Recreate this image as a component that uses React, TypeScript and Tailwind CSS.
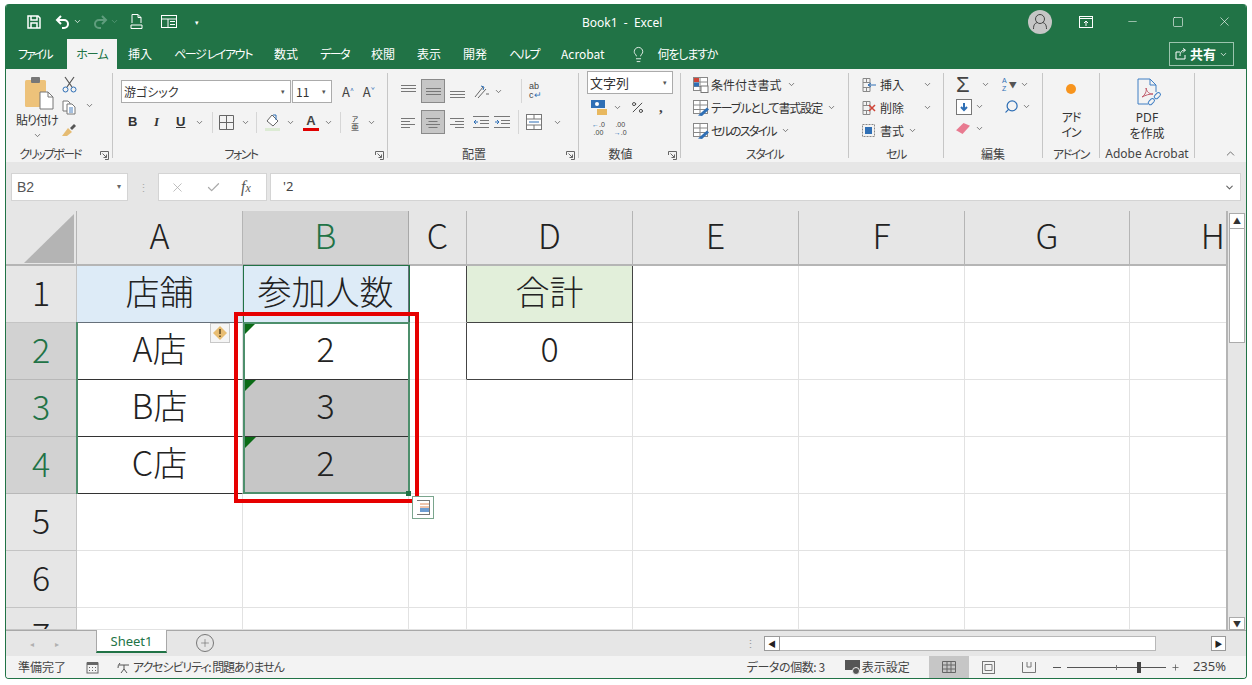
import React from 'react';
import { ChevronDown, ChevronUp, Lightbulb, Search, X, Check, Minus, Square, Plus, Percent } from 'lucide-react';

const jp = 'font-["Noto_Sans_CJK_JP","Noto_Sans",sans-serif] [font-feature-settings:"palt"]';

const Chev = ({ className = '' }: { className?: string }) => (
    <ChevronDown size={9} strokeWidth={2} className={`text-[#555] shrink-0 ${className}`} />
);

const Launcher = () => (
    <svg width="9" height="9" viewBox="0 0 9 9" className="shrink-0" fill="none" stroke="#666">
        <path d="M.5 4V.5H8.500V8.500H5" />
        <path d="M2.500 2.500L6.500 6.500M6.500 3.500V6.500H3.500" />
    </svg>
);

// horizontal alignment icon, four lines
const Lines = ({ kind = 'center' }: { kind?: string }) => {
    const w = 14;
    const ys = [3, 6, 9, 12];
    const parts = [w, w - 5, w, w - 5];
    return (
        <svg width={w} height="15" viewBox={`0 0 ${w} 15`} stroke="#777" className="shrink-0">
            {ys.map((y, i) => {
                const x = kind === 'center' ? (w - parts[i]) / 2 : kind === 'right' ? w - parts[i] : 0;
                return <path key={y} d={`M${x} ${y}.5H${x + parts[i]}`} />;
            })}
        </svg>
    );
};

// vertical alignment icon, three lines
const VLines = ({ top }: { top: number }) => (
    <svg width="15" height="15" viewBox="0 0 15 15" stroke="#777" className="shrink-0">
        {[0, 3, 6].map(d => <path key={d} d={`M0 ${top + d}.5H15`} />)}
    </svg>
);

const Group = ({ width, label, launcher = false, labelClass = '', children }: { width: string; label: string; launcher?: boolean; labelClass?: string; children: React.ReactNode }) => (
    <div className={`${width} shrink-0 h-[85px] mt-[4px] flex flex-col relative border-r border-[#c6c6c6]`}>
        <div className="h-[71px] shrink-0 flex">{children}</div>
        <div className={`h-[19px] shrink-0 text-[12px] leading-[19px] text-center text-[#444] whitespace-nowrap ${launcher ? 'pr-[18px]' : ''} ${labelClass}`}>{label}</div>
        {launcher && <div className="absolute right-[3px] -bottom-[2px]"><Launcher /></div>}
    </div>
);

const ClipboardGroup = () => (
    <Group width="w-[107px]" label="クリップボード" launcher labelClass="tracking-[-1.8px]">
        <div className="w-[53px] pl-[10px] flex flex-col">
            <svg width="30" height="34" viewBox="0 0 30 34" className="ml-[9px] mt-[3px]">
                <rect x="0" y="4" width="21" height="27" rx="1.500" fill="#edc27a" />
                <rect x="6" y="1" width="9" height="6" rx="1" fill="#777" />
                <path d="M15 16h8l5 5v12H15z" fill="#fff" stroke="#777" />
                <path d="M23 16v5h5" fill="none" stroke="#777" />
            </svg>
            <div className="text-[12px] leading-[14px] whitespace-nowrap mt-[3px] text-[#333] tracking-[-1px]">貼り付け</div>
            <Chev className="ml-[17px] mt-[4px]" />
        </div>
        <div className="flex flex-col pl-[3px] pt-[3px] gap-[7px]">
            <svg width="15" height="17" viewBox="0 0 15 17" fill="none" stroke="#555">
                <path d="M3 1l7 10M12 1L5 11" strokeWidth="1.200" />
                <circle cx="3.500" cy="13.500" r="2.500" stroke="#2f6fb5" />
                <circle cx="11.500" cy="13.500" r="2.500" stroke="#2f6fb5" />
            </svg>
            <svg width="14" height="15" viewBox="0 0 14 15" fill="#fff" stroke="#777"><path d="M1 1h5l2 2v8H1z" /><path d="M5 4h5l3 3v7H5z" /><path d="M7 8h4M7 10h4M7 12h4" stroke="#4a7ebb" /></svg>
            <svg width="15" height="15" viewBox="0 0 15 15"><path d="M0 14L6 6l4 4-5 4z" fill="#e5bb72" /><path d="M8 6l4-4 2 2-4 4z" fill="#555" /></svg>
        </div>
        <div className="pl-[8px] pt-[28px]"><Chev /></div>
    </Group>
);

const FontGroup = () => (
    <Group width="w-[275px]" label="フォント" launcher labelClass="tracking-[-1.500px]">
        <div className="pl-[8px] pt-[7px] flex flex-col gap-[9px]">
            <div className="flex items-center">
                <div className="w-[170px] h-[23px] bg-white border border-[#ababab] flex items-center justify-between px-[2px] text-[12px] text-[#333]">
                    游ゴシック<span className="text-[7px] text-[#555] pr-[3px]">▾</span>
                </div>
                <div className="w-[40px] h-[23px] bg-white border border-[#ababab] ml-[1px] flex items-center justify-between px-[3px] text-[12px] text-[#333]">
                    11<span className="text-[7px] text-[#555] pr-[2px]">▾</span>
                </div>
                <span className="ml-[10px] text-[13px] text-[#444]">A<sup className="text-[7px] text-[#2f6fb5]">^</sup></span>
                <span className="ml-[9px] text-[13px] text-[#444]">A<sup className="text-[7px] text-[#2f6fb5]">ˇ</sup></span>
            </div>
            <div className="flex items-center h-[20px] pl-[7px] text-[13px] text-[#333]">
                <b className="font-['Liberation_Sans',sans-serif] w-[12px]">B</b>
                <i className="font-['Liberation_Serif',serif] font-bold w-[14px] ml-[14px]">I</i>
                <u className="font-['Liberation_Sans',sans-serif] font-bold w-[12px] ml-[8px]">U</u>
                <Chev className="ml-[7px]" />
                <div className="w-px h-[21px] bg-[#d6d6d6] ml-[8px]" />
                <svg width="15" height="15" viewBox="0 0 15 15" fill="none" stroke="#666" className="ml-[6px] shrink-0"><path d="M.5.5h14v14H.5zM7.500.5v14M.5 7.500h14" /></svg>
                <Chev className="ml-[7px]" />
                <div className="w-px h-[21px] bg-[#d6d6d6] ml-[6px]" />
                <svg width="17" height="18" viewBox="0 0 17 18" fill="none" className="ml-[7px] shrink-0"><path d="M8 2l6 6-5 5-6-5z" fill="#fff" stroke="#666" /><path d="M9 2h3v5" stroke="#2f6fb5" /><rect x="1" y="15" width="15" height="3" fill="#dcebd4" /></svg>
                <Chev className="ml-[5px]" />
                <div className="flex flex-col items-center w-[16px] ml-[8px] font-['Liberation_Sans',sans-serif] font-bold leading-[14px] text-[#444]">A<div className="w-[16px] h-[3px] bg-[#e00000]" /></div>
                <Chev className="ml-[5px]" />
                <div className="w-px h-[21px] bg-[#d6d6d6] ml-[7px]" />
                <span className="text-[8px] leading-[9px] w-[12px] ml-[8px] text-center">ァ<br />亜</span>
                <Chev className="ml-[6px]" />
            </div>
        </div>
    </Group>
);

const AlignGroup = () => (
    <Group width="w-[191px]" label="配置" launcher>
        <div className="pl-[13px] pt-[6px] flex flex-col gap-[7px]">
            <div className="flex items-center h-[24px]">
                <VLines top={1} />
                <div className="w-[24px] h-[24px] ml-[5px] bg-[#c6c6c6] border border-[#8a8a8a] flex items-center justify-center"><VLines top={4} /></div>
                <div className="ml-[5px]"><VLines top={7} /></div>
                <svg width="17" height="15" viewBox="0 0 17 15" className="ml-[8px] shrink-0" stroke="#666" fill="none"><path d="M2 13L10 3M5 14l8-9M13 10h3" /><path d="M8 2l3 1-1 3" stroke="#2f6fb5" /></svg>
                <Chev className="ml-[4px]" />
                <div className="w-px h-[24px] bg-[#d6d6d6] ml-[18px]" />
                <div className="ml-[7px] text-[9px] leading-[9px] text-[#444] w-[16px] font-['Liberation_Sans',sans-serif]">ab<br />c<span className="text-[#2f6fb5]">↵</span></div>
            </div>
            <div className="flex items-center h-[24px]">
                <Lines kind="left" />
                <div className="w-[24px] h-[24px] ml-[6px] bg-[#c6c6c6] border border-[#8a8a8a] flex items-center justify-center"><Lines /></div>
                <div className="ml-[5px]"><Lines kind="right" /></div>
                <svg width="16" height="14" viewBox="0 0 16 14" className="ml-[9px] shrink-0" stroke="#777" fill="none"><path d="M0 1.500H16M7 5.500H16M7 8.500H16M0 12.500H16" /><path d="M5 7H1M3 5L1 7l2 2" stroke="#2f6fb5" /></svg>
                <svg width="16" height="14" viewBox="0 0 16 14" className="ml-[5px] shrink-0" stroke="#777" fill="none"><path d="M0 1.500H16M7 5.500H16M7 8.500H16M0 12.500H16" /><path d="M1 7h4M3 5l2 2-2 2" stroke="#2f6fb5" /></svg>
                <div className="w-px h-[24px] bg-[#d6d6d6] ml-[8px]" />
                <svg width="16" height="16" viewBox="0 0 16 16" className="ml-[7px] shrink-0" stroke="#777" fill="#fff"><rect x=".5" y=".5" width="15" height="15" /><path d="M.5 5h15M.5 11h15M8 .5V5M8 11v4.500" /><path d="M3 8h10" stroke="#2f6fb5" /></svg>
                <Chev className="ml-[11px]" />
            </div>
        </div>
    </Group>
);

const NumberGroup = () => (
    <Group width="w-[102px]" label="数値" launcher>
        <div className="pl-[8px] -mt-[2px] flex flex-col">
            <div className="w-[86px] h-[23px] bg-white border border-[#ababab] flex items-center justify-between px-[2px] text-[13px] text-[#333]">
                文字列<span className="text-[7px] text-[#555] pr-[3px]">▾</span>
            </div>
            <div className="flex items-center h-[22px] mt-[2px]">
                <svg width="17" height="17" viewBox="0 0 17 17" className="ml-[4px] shrink-0"><rect x="0" y="1" width="14" height="8" fill="#2f6fb5" /><circle cx="6" cy="5" r="2" fill="#fff" /><rect x="6" y="10" width="10" height="6" fill="#e8b85f" /></svg>
                <Chev className="ml-[5px]" />
                <Percent size={15} className="ml-[8px] text-[#444]" strokeWidth={1.500} />
                <span className="ml-[14px] font-bold text-[15px] leading-[15px] text-[#444] font-['Liberation_Serif',serif]">,</span>
            </div>
            <div className="flex h-[20px] mt-[3px] ml-[5px] text-[7px] leading-[8px] gap-[9px] text-[#444] font-['Liberation_Sans',sans-serif]">
                <span className="text-center"><span className="text-[#2f6fb5]">←</span>.0<br />.00</span>
                <span className="text-center">.00<br /><span className="text-[#2f6fb5]">→</span>.0</span>
            </div>
        </div>
    </Group>
);

const StyleIcon = ({ kind }: { kind: string }) => (
    <svg width="16" height="16" viewBox="0 0 16 16" fill="#fff" stroke="#888" className="shrink-0 mr-[2px]">
        <rect x=".5" y=".5" width="14" height="13" />
        <path d="M.5 5h14M.5 9.500h14M7 .5v13" />
        {kind === 'cond' ? (
            <>
                <rect x="1" y="1" width="5" height="4" fill="#d04437" stroke="none" />
                <rect x="1" y="5.500" width="5" height="4" fill="#2f6fb5" stroke="none" />
                <rect x="8" y="9" width="7" height="6.500" fill="#fff" stroke="#777" />
            </>
        ) : (
            <path d="M5 15.500l9-8 2 2-7 6.500z" fill="#2f6fb5" stroke="none" />
        )}
    </svg>
);

const StylesGroup = () => (
    <Group width="w-[168px]" label="スタイル" labelClass="tracking-[-1.500px]">
        <div className="pl-[12px] flex flex-col">
            {[
                { k: 'cond', t: '条件付き書式', s: '' },
                { k: 'table', t: 'テーブルとして書式設定', s: 'tracking-[-1.100px]' },
                { k: 'cell', t: 'セルのスタイル', s: 'tracking-[-1.800px]' },
            ].map(r => (
                <div key={r.t} className="flex items-center h-[23px] whitespace-nowrap text-[12px] text-[#333]">
                    <StyleIcon kind={r.k} />
                    <span className={r.s}>{r.t}</span>
                    <Chev className="ml-[5px]" />
                </div>
            ))}
        </div>
    </Group>
);

const CellIcon = ({ kind }: { kind: string }) => (
    <svg width="16" height="16" viewBox="0 0 16 16" fill="none" stroke="#888" className="mr-[3px] shrink-0">
        {kind === 'format' ? (
            <>
                <path d="M1.500 1.500h12v12h-12z" strokeDasharray="2 1" />
                <rect x="4" y="4" width="7" height="7" fill="#2f6fb5" stroke="none" />
            </>
        ) : (
            <>
                <path d="M2 1.500h7M2 5.500h7M2 10.500h7M2 14.500h7M2 1.500v13M9 1.500v13M5.500 1.500v4M5.500 10.500v4" />
                {kind === 'ins' ? <path d="M15 8H7M10 6L7 8l3 2" stroke="#2f6fb5" /> : <path d="M8 5l6 6M14 5l-6 6" stroke="#d04437" strokeWidth="1.500" />}
            </>
        )}
    </svg>
);

const CellsGroup = () => (
    <Group width="w-[95px]" label="セル" labelClass="tracking-[-1.500px]">
        <div className="pl-[12px] flex flex-col">
            {[
                { t: '挿入', k: 'ins', ml: 'ml-[19px]' },
                { t: '削除', k: 'del', ml: 'ml-[19px]' },
                { t: '書式', k: 'format', ml: 'ml-[4px]' },
            ].map(r => (
                <div key={r.t} className="flex items-center h-[23px] text-[12px] text-[#333]">
                    <CellIcon kind={r.k} />
                    {r.t}
                    <Chev className={r.ml} />
                </div>
            ))}
        </div>
    </Group>
);

const EditGroup = () => (
    <Group width="w-[99px]" label="編集">
        <div className="pl-[12px] flex flex-col">
            <div className="flex items-center h-[23px]">
                <span className="text-[22px] leading-[22px] text-[#444] w-[16px] font-['Liberation_Sans',sans-serif]">Σ</span>
                <Chev className="ml-[9px]" />
                <span className="ml-[12px] text-[7px] leading-[8px] text-[#2f6fb5] font-['Liberation_Sans',sans-serif]">A<br />Z</span>
                <span className="text-[8px] text-[#555] ml-[2px]">▼</span>
                <Chev className="ml-[3px]" />
            </div>
            <div className="flex items-center h-[21px]">
                <svg width="16" height="16" viewBox="0 0 16 16" fill="#fff" stroke="#777" className="shrink-0"><rect x=".5" y=".5" width="15" height="15" /><path d="M8 4v7M5 8l3 3 3-3" stroke="#2f6fb5" strokeWidth="2" fill="none" /></svg>
                <Chev className="ml-[3px]" />
                <Search size={15} className="ml-[20px] -scale-x-100 text-[#2f6fb5]" strokeWidth={2} />
                <Chev className="ml-[3px]" />
            </div>
            <div className="flex items-center h-[23px]">
                <svg width="15" height="13" viewBox="0 0 16 14" className="shrink-0"><path d="M0 9l8-8 7 3-8 9z" fill="#e87a90" /></svg>
                <Chev className="ml-[4px]" />
            </div>
        </div>
    </Group>
);

const AddinGroup = () => (
    <Group width="w-[57px]" label="アドイン" labelClass="tracking-[-1.500px]">
        <div className="w-full flex flex-col items-center pt-[11px]">
            <div className="w-[10px] h-[10px] rounded-full bg-[#f7941d]" />
            <div className="text-[12px] leading-[15px] text-center mt-[15px] text-[#333] tracking-[-1px]">アド<br />イン</div>
        </div>
    </Group>
);

const AcrobatGroup = () => (
    <Group width="w-[95px]" label="Adobe Acrobat" labelClass="font-['Noto_Sans',sans-serif]">
        <div className="w-full flex flex-col items-center pt-[5px]">
            <svg width="28" height="30" viewBox="0 0 28 30" fill="none" stroke="#3f7ec4" className="ml-[3px]">
                <path d="M13 26H3V1h12l6 6v7" />
                <path d="M15 1v6h6" />
                <path d="M7 19c3-2 5-6 4-9 1 4 3 6 7 6-4 0-7 1-11 3z" stroke="#c05a6a" />
                <rect x="13" y="22" width="7" height="4" rx="2" transform="rotate(-45 16 24)" />
                <rect x="19" y="16" width="7" height="4" rx="2" transform="rotate(-45 22 18)" />
            </svg>
            <div className="text-[12px] leading-[15px] text-center mt-[1px] text-[#333]"><span className="font-['Noto_Sans',sans-serif]">PDF</span><br />を作成</div>
        </div>
    </Group>
);

const tabs = [
    { t: '挿入', s: '' },
    { t: 'ページ レイアウト', s: 'tracking-[-1.400px]' },
    { t: '数式', s: '' },
    { t: 'データ', s: 'tracking-[-1.500px]' },
    { t: '校閲', s: '' },
    { t: '表示', s: '' },
    { t: '開発', s: '' },
    { t: 'ヘルプ', s: 'tracking-[-1.500px]' },
    { t: 'Acrobat', s: '' },
];

const Header = () => (
    <div className="bg-[#217346] text-white">
        <div className="h-[35px] flex items-center relative">
            <div className="flex items-center pl-[21px] gap-[8px]">
                <svg width="14" height="14" viewBox="0 0 14 14" fill="none" stroke="#fff" strokeWidth="1.500"><path d="M1 1h10l2 2v10H1z" /><path d="M4 1v4h6V1M4 13V8h6v5" /></svg>
                <svg width="16" height="14" viewBox="0 0 16 14" fill="none" stroke="#fff" strokeWidth="2" className="ml-[6px]"><path d="M6 1L2 5l4 4" /><path d="M2 5h7a4 4 0 010 8H7" /></svg>
                <ChevronDown size={9} className="-ml-[6px]" />
                <svg width="16" height="14" viewBox="0 0 16 14" fill="none" stroke="#5f9d7d" strokeWidth="2" className="ml-[2px]"><path d="M10 1l4 4-4 4" /><path d="M14 5H7a4 4 0 000 8h2" /></svg>
                <ChevronDown size={9} className="-ml-[6px] text-[#5f9d7d]" />
                <svg width="13" height="15" viewBox="0 0 13 15" fill="none" stroke="#fff" className="ml-[3px]"><path d="M2 9V.5h6l3 3V9M8 .5v3h3M1 11h11v3.500H1z" /></svg>
                <svg width="16" height="13" viewBox="0 0 16 13" fill="none" stroke="#fff" className="ml-[10px]"><rect x=".5" y=".5" width="15" height="12" /><path d="M.5 4h15M7 4v8.500M9 6.500h5M9 9.500h5" /></svg>
                <span className="ml-[10px] text-[7px] leading-[8px]">▾</span>
            </div>
            <div className="absolute left-[576px] top-[10px] text-[12px] leading-[18px] whitespace-pre font-['Noto_Sans',sans-serif]">Book1  -  Excel</div>
            <div className="ml-auto flex items-center">
                <div className="w-[24px] h-[24px] rounded-full bg-[#c6c6c6] flex items-center justify-center">
                    <svg width="16" height="18" viewBox="0 0 16 18" fill="none" stroke="#444"><circle cx="8" cy="6" r="4.500" /><path d="M1.500 16c0-5 2-6 4-6.500M14.500 16c0-5-2-6-4-6.500" /></svg>
                </div>
                <svg width="14" height="12" viewBox="0 0 14 12" fill="none" stroke="#fff" className="ml-[27px]"><rect x=".5" y=".5" width="13" height="11" /><path d="M.5 2.500h13M7 10V5M5 7l2-2 2 2" /></svg>
                <Minus size={13} strokeWidth={1} className="ml-[33px]" />
                <Square size={12} strokeWidth={1.200} className="ml-[33px]" />
                <X size={15} strokeWidth={1} className="ml-[33px] mr-[14px]" />
            </div>
        </div>
        <div className="h-[30px] flex items-end text-[12px] leading-[30px]">
            <div className="pl-[12px] w-[61px] h-[30px] tracking-[-2px]">ファイル</div>
            <div className="w-[50px] h-[30px] bg-[#f3f3f3] text-[#217346] text-center tracking-[-1px]">ホーム</div>
            <div className="flex h-[30px] pl-[11px] gap-[22px] whitespace-nowrap">
                {tabs.map(t => <span key={t.t} className={t.s}>{t.t}</span>)}
            </div>
            <div className="flex items-center h-[30px] ml-[25px] gap-[11px] whitespace-nowrap">
                <Lightbulb size={17} strokeWidth={1.200} />
                <span className="tracking-[-1.200px]">何をしますか</span>
            </div>
            <div className="ml-auto mr-[12px] mb-[3px] w-[65px] h-[24px] border border-[#9cc4ae] flex items-center justify-center gap-[3px]">
                <svg width="12" height="12" viewBox="0 0 12 12" fill="none" stroke="#fff"><path d="M1 4v7h9V7M1 4h4M5 8c0-4 2-6 5-6M8 .5L10.500 2 8 4.500" /></svg>
                <span className="font-bold text-[13px] leading-[22px]">共有</span>
                <ChevronDown size={9} />
            </div>
        </div>
    </div>
);

const Ribbon = () => (
    <div className="h-[93px] bg-[#f3f3f3] flex relative">
        <ClipboardGroup />
        <FontGroup />
        <AlignGroup />
        <NumberGroup />
        <StylesGroup />
        <CellsGroup />
        <EditGroup />
        <AddinGroup />
        <AcrobatGroup />
        <ChevronUp size={13} strokeWidth={1.500} className="absolute right-[9px] bottom-[2px] text-[#555]" />
    </div>
);

const FormulaBar = () => (
    <div className="h-[49px] bg-[#e6e6e6] pt-[11px] px-[5px] flex items-start">
        <div className="w-[117px] h-[28px] bg-white border border-[#d4d4d4] flex items-center justify-between pl-[5px] pr-[6px] text-[14px] text-[#555] font-['Liberation_Sans',sans-serif]">
            B2<span className="text-[8px] text-[#666]">▾</span>
        </div>
        <div className="w-[30px] h-[28px] flex items-center justify-center text-[#aaa] text-[11px] leading-[6px]">⋮</div>
        <div className="w-[109px] h-[28px] bg-white border border-[#d4d4d4] flex items-center pl-[11px] text-[#aaa]">
            <X size={15} strokeWidth={1.200} />
            <Check size={15} strokeWidth={2} className="ml-[21px]" />
            <i className="ml-[20px] text-[16px] leading-[18px] text-[#555] font-['Liberation_Serif',serif]">f<span className="text-[12px]">x</span></i>
        </div>
        <div className="flex-1 h-[28px] ml-[3px] bg-white border border-[#d4d4d4] flex items-center justify-between pl-[12px] pr-[5px] text-[13px] text-[#444] font-['Noto_Sans',sans-serif]">
            &apos;2<ChevronDown size={11} strokeWidth={2.500} className="text-[#666]" />
        </div>
    </div>
);

const colHeaders = ['A', 'B', 'C', 'D', 'E', 'F', 'G', 'H'];

const dataRows = [
    { a: '店舗', b: '参加人数', d: '合計', head: true },
    { a: 'A店', b: '2', d: '0' },
    { a: 'B店', b: '3' },
    { a: 'C店', b: '2' },
    {},
    {},
    {},
] as { a?: string; b?: string; d?: string; head?: boolean }[];

const sheetText = 'text-[34px] leading-none font-light [font-feature-settings:normal] pb-[6px]';

const GreenCorner = () => (
    <svg width="13" height="13" viewBox="0 0 13 13" className="absolute left-0 top-0"><path d="M0 0h13L0 13z" fill="#0b6b16" /></svg>
);

const Sheet = () => (
    <div className="flex-1 relative overflow-hidden flex">
        <div className="flex-1 overflow-hidden grid grid-cols-[71px_166px_166px_58px_166px_166px_166px_165px_96px] grid-rows-[55px_repeat(6,57px)_22px] text-[#222]">
            <div className="bg-[#e6e6e6] border-r border-b-2 border-[#b5b5b5] relative">
                <svg width="50" height="49" viewBox="0 0 50 49" className="absolute right-[2px] bottom-[1px]"><path d="M50 0V49H0z" fill="#b4b4b4" /></svg>
            </div>
            {colHeaders.map(c => (
                <div key={c} className={`border-r border-b-2 flex items-center ${c === 'H' ? 'justify-end border-r-0 pr-[1px]' : 'justify-center'} ${sheetText} ${c === 'B' ? 'bg-[#d2d2d2] border-[#a8a8a8] text-[#217346]' : 'bg-[#e6e6e6] border-[#b5b5b5]'}`}>{c}</div>
            ))}
            {dataRows.map((r, i) => {
                const rowSel = i >= 1 && i <= 3;
                const grey = i === 2 || i === 3;
                const frameD = i <= 1;
                return (
                    <React.Fragment key={i}>
                        <div className={`overflow-hidden border-r border-b ${rowSel ? 'bg-[#d2d2d2] border-[#b8b8b8] text-[#217346]' : 'bg-[#e6e6e6] border-[#c4c4c4]'}`}>
                            <div className={`h-[57px] flex items-center justify-center ${sheetText}`}>{i + 1}</div>
                        </div>
                        <div className={`flex items-center justify-center ${sheetText} border-r border-b ${r.head ? 'bg-[#ddebf7] border-[#c8d4de] border-b-[#66707a]' : rowSel ? 'bg-white border-r-[#e0e0e0] border-b-[#333]' : 'bg-white border-[#e2e2e2]'}`}>{r.a}</div>
                        <div className={`relative flex items-center justify-center ${sheetText} border-r border-b ${r.head ? 'bg-[#ddebf7] border-[#66707a]' : grey ? 'bg-[#c6c6c6] border-[#333]' : rowSel ? 'bg-white border-[#333]' : 'bg-white border-[#e2e2e2]'}`}>
                            {rowSel && <GreenCorner />}
                            {r.b}
                        </div>
                        <div className={`bg-white border-r border-b border-b-[#e2e2e2] ${frameD ? 'border-r-[#444]' : 'border-r-[#e2e2e2]'}`} />
                        <div className={`flex items-center justify-center ${sheetText} border-r border-b ${r.head ? 'bg-[#e2efda] border-[#444]' : i === 1 ? 'bg-white border-[#444]' : 'bg-white border-[#e2e2e2]'}`}>{r.d}</div>
                        <div className="bg-white border-r border-b border-[#e2e2e2]" />
                        <div className="bg-white border-r border-b border-[#e2e2e2]" />
                        <div className="bg-white border-r border-b border-[#e2e2e2]" />
                        <div className="bg-white border-b border-[#e2e2e2]" />
                    </React.Fragment>
                );
            })}
        </div>
        <div className="w-[20px] bg-[#e6e6e6] border-l-2 border-[#b5b5b5] flex flex-col items-center">
            <div className="mt-[2px] w-[16px] h-[16px] bg-white border border-[#ababab] flex items-center justify-center text-[8px] text-[#333]">▲</div>
            <div className="w-[16px] h-[114px] bg-white border border-[#ababab] border-t-0" />
            <div className="mt-auto w-[16px] h-[13px] bg-white border border-[#ababab] flex items-center justify-center text-[8px] text-[#333]">▼</div>
        </div>

        {/* selection frame and the markers that sit on top of the cells */}
        <div className="absolute left-[70px] top-[111px] w-[168px] h-[172px] border-l-2 border-[#4d8f6c] pointer-events-none" />
        <div className="absolute left-[237px] top-[54px] w-[167px] h-[58px] border border-[#217346] pointer-events-none" />
        <div className="absolute left-[237px] top-[111px] w-[167px] h-[172px] border-2 border-[#4d8f6c] pointer-events-none" />
        <div className="absolute left-[400px] top-[280px] w-[5px] h-[5px] bg-[#217346] pointer-events-none" />
        <div className="absolute left-[228px] top-[101px] w-[185px] h-[191px] border-[4px] border-[#e60000] pointer-events-none" />
        <div className="absolute left-[204px] top-[112px] w-[20px] h-[20px] bg-[#f5f5f5] border border-[#c8c8c8] flex items-center justify-center">
            <svg width="14" height="14" viewBox="0 0 14 14"><path d="M7 0l7 7-7 7-7-7z" fill="#e8bd72" /><path d="M7 3v5M7 9.500v1.500" stroke="#5a4520" strokeWidth="1.500" /></svg>
        </div>
        <div className="absolute left-[406px] top-[285px] w-[22px] h-[23px] bg-white border border-[#7aa58d] flex items-center justify-center">
            <svg width="15" height="15" viewBox="0 0 15 15" fill="none"><path d="M1 .5h13M1 14.500h13M13.500 .5v14" stroke="#777" /><path d="M4 4h9M4 7h9" stroke="#e08a5a" /><path d="M4 9h9M4 11h9" stroke="#3f7ec4" strokeWidth="1.500" /></svg>
        </div>
    </div>
);

const TabBar = () => (
    <div className="h-[26px] bg-[#e6e6e6] border-t border-[#a8a8a8] flex relative">
        <div className="w-[90px] flex items-center pl-[24px] gap-[21px] text-[#b0b0b0] text-[8px]"><span>◂</span><span>▸</span></div>
        <div className="w-[71px] h-[23px] -mt-px bg-white border-x border-[#a8a8a8] border-b-2 border-b-[#217346] text-[13px] leading-[22px] text-center text-[#217346] font-['Noto_Sans',sans-serif]">Sheet1</div>
        <div className="ml-[29px] mt-[3px] w-[18px] h-[18px] rounded-full border border-[#777] flex items-center justify-center text-[#666]"><Plus size={12} strokeWidth={1.200} /></div>
        <div className="absolute left-[739px] top-[7px] text-[#999] text-[11px] leading-[10px]">⋮</div>
        <div className="absolute left-[758px] top-[5px] w-[462px] h-[15px] flex">
            <div className="w-[16px] h-[15px] bg-white border border-[#9a9a9a] flex items-center justify-center text-[8px] text-[#222]">◀</div>
            <div className="w-[376px] h-[15px] bg-white border border-l-0 border-[#b8b8b8]" />
            <div className="ml-auto w-[15px] h-[15px] bg-white border border-[#9a9a9a] flex items-center justify-center text-[8px] text-[#222]">▶</div>
        </div>
    </div>
);

const StatusBar = () => (
    <div className="h-[22px] bg-[#f3f3f3] flex items-center text-[12px] text-[#444] whitespace-nowrap">
        <span className="ml-[12px]">準備完了</span>
        <svg width="13" height="13" viewBox="0 0 13 13" className="ml-[20px] shrink-0" fill="#666"><rect x="1" y="2" width="11" height="10" fill="none" stroke="#666" /><rect x="1" y="1" width="11" height="3" /><path d="M3 6h1v1H3zM6 6h1v1H6zM9 6h1v1H9zM3 9h1v1H3zM6 9h1v1H6zM9 9h1v1H9z" /></svg>
        <svg width="16" height="14" viewBox="0 0 16 14" className="ml-[17px] shrink-0" fill="none" stroke="#555"><path d="M4 3a6 6 0 00-2 5" /><path d="M3 5c3 0 7 0 10 0M8 5v4M5 13l3-4 3 4" /></svg>
        <span className="ml-[1px] tracking-[-1.100px]">アクセシビリティ: 問題ありません</span>
        <span className="ml-auto tracking-[-.4px]">データの個数: 3</span>
        <svg width="17" height="15" viewBox="0 0 17 15" className="ml-[20px] shrink-0"><rect x="0" y="0" width="15" height="10" fill="#555" /><circle cx="11" cy="11" r="3.500" fill="#555" stroke="#f3f3f3" /></svg>
        <span>表示設定</span>
        <div className="ml-[19px] w-[40px] h-[22px] bg-[#c6c6c6] flex items-center justify-center">
            <svg width="14" height="12" viewBox="0 0 14 12" fill="none" stroke="#666"><path d="M.5.5h13v11H.5zM.5 4h13M.5 8h13M5 .5v11M9 .5v11" /></svg>
        </div>
        <div className="w-[40px] flex justify-center">
            <svg width="13" height="13" viewBox="0 0 13 13" fill="none" stroke="#777"><rect x=".5" y=".5" width="12" height="12" /><path d="M3 3.500h7v6H3z" /></svg>
        </div>
        <div className="w-[40px] flex justify-center">
            <svg width="14" height="11" viewBox="0 0 14 11" fill="none" stroke="#777"><path d="M.5 0v10.500h13V0M5 0v5h4V0" /></svg>
        </div>
        <div className="ml-[4px] w-[8px] h-px bg-[#555]" />
        <div className="ml-[6px] w-[99px] h-px bg-[#555] relative">
            <div className="absolute left-[49px] -top-[2px] w-px h-[5px] bg-[#777]" />
            <div className="absolute left-[70px] -top-[5px] w-[4px] h-[11px] bg-[#444]" />
        </div>
        <Plus size={9} className="ml-[5px] text-[#555]" />
        <span className="ml-[13px] mr-[20px] text-[13px] font-['Noto_Sans',sans-serif]">235%</span>
    </div>
);

export default function App() {
    return (
        <div className={`w-[1252px] h-[685px] bg-white pt-[4px] pl-[5px] overflow-hidden ${jp}`}>
            <div className="w-[1242px] h-[675px] flex flex-col border-x border-b border-[#217346] rounded-[4px] overflow-hidden">
                <Header />
                <Ribbon />
                <FormulaBar />
                <Sheet />
                <TabBar />
                <StatusBar />
            </div>
        </div>
    );
}
